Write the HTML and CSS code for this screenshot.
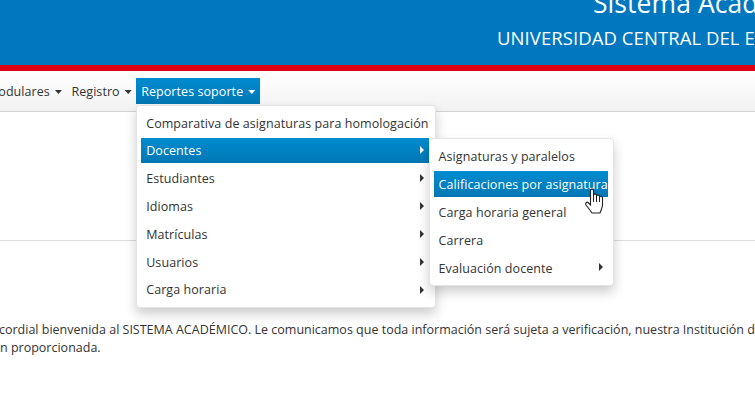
FILE: index.html
```html
<!DOCTYPE html>
<html lang="es">
<head>
<meta charset="utf-8">
<title>Sistema Académico</title>
<link rel="stylesheet" href="styles.css">
</head>
<body>
<header class="banner">
  <div class="title">Sistema Académico</div>
  <div class="subtitle">UNIVERSIDAD CENTRAL DEL ECUADOR</div>
</header>
<nav class="navbar">
  <ul class="nav">
    <li class="nav-item">Modulares<i class="caret"></i></li>
    <li class="nav-item">Registro<i class="caret"></i></li>
    <li class="nav-item active">Reportes soporte<i class="caret"></i>
      <ul class="menu menu-main">
        <li class="entry">Comparativa de asignaturas para homologación</li>
        <li class="entry has-sub active">Docentes
          <ul class="menu menu-sub">
            <li class="entry">Asignaturas y paralelos</li>
            <li class="entry active">Calificaciones por asignatura</li>
            <li class="entry">Carga horaria general</li>
            <li class="entry">Carrera</li>
            <li class="entry has-sub">Evaluación docente</li>
          </ul>
        </li>
        <li class="entry has-sub">Estudiantes</li>
        <li class="entry has-sub">Idiomas</li>
        <li class="entry has-sub">Matrículas</li>
        <li class="entry has-sub">Usuarios</li>
        <li class="entry has-sub">Carga horaria</li>
      </ul>
    </li>
  </ul>
</nav>
<main class="content">
  <hr class="rule">
  <p class="welcome line-one">cordial bienvenida al SISTEMA ACADÉMICO. Le comunicamos que toda información será sujeta a verificación, nuestra Institución dará</p>
  <p class="welcome line-two">n proporcionada.</p>
</main>
<svg class="pointer" width="20" height="26" viewBox="0 0 20 26" aria-hidden="true">
  <path d="M5.500 3C5.500.5 8.500.5 8.500 3V7C9 5.500 11 5.500 11.500 7V8C12 6.500 14 6.500 14.500 8V9C15 7.800 17.500 8 17.500 10V17C17.500 20 16 22 15 25H7C5 22 3 19.500 1 17C0 15.500 1.500 13.500 3 14.500L5.500 17Z" fill="#fff" stroke="#222" stroke-width="1.100"/>
  <path d="M8.500 7v7M11.500 8v6M14.500 9v5" stroke="#222" stroke-width="1" fill="none"/>
</svg>
</body>
</html>
```

FILE: styles.css
```css
html, body {
  margin: 0;
  padding: 0;
  width: 755px;
  height: 409px;
  overflow: hidden;
  background: #fff;
  font-family: "Open Sans", sans-serif;
  font-size: 12.5px;
  letter-spacing: .07px;
  color: #333;
}

.banner {
  height: 65px;
  background: #0077be;
  border-bottom: 6px solid #e00016;
  color: #fff;
  overflow: hidden;
  white-space: nowrap;
}

.title {
  margin: -13px 0 0 593px;
  font-size: 26.500px;
  line-height: 33px;
}

.subtitle {
  margin: 6px 0 0 497px;
  font-size: 18.500px;
  line-height: 24px;
}

.navbar {
  height: 40px;
  background: linear-gradient(#fff, #f2f2f2);
  border-bottom: 1px solid #d4d4d4;
}

.nav {
  display: flex;
  list-style: none;
  margin: 0 0 0 -18px;
  padding: 7px 0 0;
  white-space: nowrap;
}

.nav-item {
  position: relative;
  height: 26px;
  line-height: 27px;
  padding: 0 4.500px 0 5px;
}

.nav-item.active {
  background: linear-gradient(#008ccf, #0077b5);
  color: #fff;
}

.caret {
  display: inline-block;
  width: 7px;
  height: 4px;
  margin-left: 5px;
  vertical-align: 2px;
  background: #333;
  clip-path: polygon(0 0, 100% 0, 50% 100%);
}

.active > .caret {
  background: #fff;
}

.menu {
  position: absolute;
  z-index: 2;
  display: flex;
  flex-direction: column;
  list-style: none;
  margin: 0;
  padding: 4px;
  background: #fff;
  color: #333;
  border: 1px solid #e4e4e4;
  border-radius: 4px;
  box-shadow: 0 6px 12px rgba(0, 0, 0, .2);
}

.menu-main {
  top: 27px;
  left: 0;
  gap: 3px;
  padding-right: 6px;
}

.menu-sub {
  top: 0;
  left: 100%;
  gap: 2px;
  padding-right: 5px;
}

.entry {
  position: relative;
  height: 25px;
  line-height: 25px;
  padding-left: 5px;
}

.menu-main > .entry:first-child {
  line-height: 27px;
}

.menu-main > .entry:last-child {
  line-height: 23px;
}

.entry.active {
  background: linear-gradient(#008ccf, #0077b5);
  color: #fff;
}

.menu-sub .entry {
  height: 26px;
  line-height: 28px;
  color: #333;
}

.menu-sub .entry.active {
  color: #fff;
}

.has-sub::after {
  content: "";
  position: absolute;
  top: 8px;
  right: 5px;
  border-left: 4px solid #333;
  border-top: 4px solid transparent;
  border-bottom: 4px solid transparent;
}

.has-sub.active::after {
  border-left-color: #fff;
}

.content {
  overflow: hidden;
}

.rule {
  margin: 128px 0 0;
  border: 0;
  border-top: 1px solid #ddd;
}

.welcome {
  margin: 0;
  line-height: 18px;
  letter-spacing: 0;
  white-space: nowrap;
}

.line-one {
  margin: 80px 0 0 -1px;
}

.line-two {
  margin: 0;
}

.pointer {
  position: absolute;
  z-index: 3;
  left: 585px;
  top: 188px;
}
```
